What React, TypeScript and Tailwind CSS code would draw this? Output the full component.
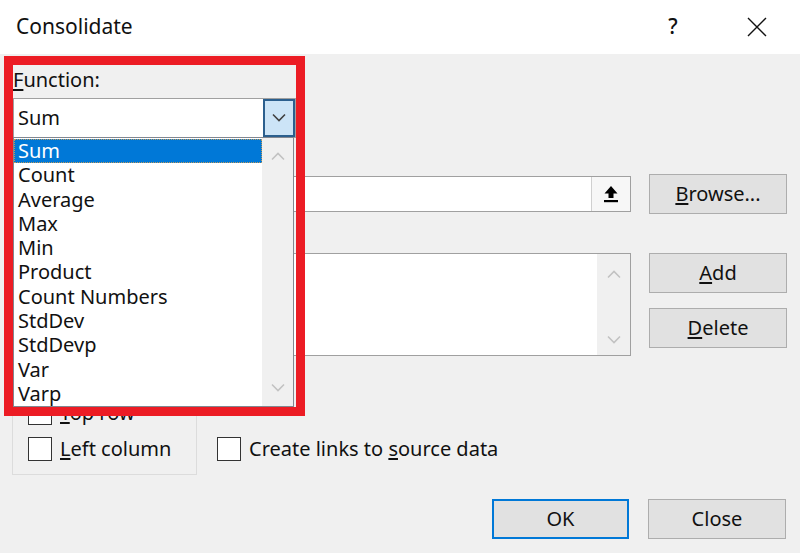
import { useState } from 'react';

const functions = ['Sum', 'Count', 'Average', 'Max', 'Min', 'Product', 'Count Numbers', 'StdDev', 'StdDevp', 'Var', 'Varp'];

function Chevron({ up = false, className = '' }: { up?: boolean; className?: string }) {
  return (
    <svg width="16" height="10" viewBox="0 0 16 10" className={className}>
      <path
        d={up ? 'M2 8.5 L8 2.5 L14 8.5' : 'M2 1.5 L8 7.5 L14 1.5'}
        fill="none"
        stroke="currentColor"
        strokeWidth="1.6"
      />
    </svg>
  );
}

function Checkbox({ children }: { children: React.ReactNode }) {
  return (
    <div className="flex items-center h-[24px]">
      <div className="w-[24px] h-[24px] border-[1.5px] border-[#333] bg-white shrink-0" />
      <span className="ml-[8px] leading-[24px]">{children}</span>
    </div>
  );
}

function Btn({ children, primary = false }: { children: React.ReactNode; primary?: boolean }) {
  return (
    <button
      className={
        'h-[40px] bg-[#e1e1e1] flex items-center justify-center ' +
        (primary ? 'w-[137px] border-2 border-[#0078d7]' : 'w-[138px] border border-[#adadad]')
      }
    >
      {children}
    </button>
  );
}

export default function App() {
  const [selected] = useState('Sum');

  return (
    <div className="relative w-[800px] h-[553px] overflow-hidden bg-[#f0f0f0] text-[20px] text-[#111] font-['Noto_Sans',sans-serif]">
      {/* title bar */}
      <div className="h-[54px] bg-white flex items-center pl-[16px]">
        <span className="text-[21px]">Consolidate</span>
        <div className="ml-auto flex items-center pr-[23px]">
          <span className="w-[40px] text-center text-[21px] font-medium">?</span>
          <div className="w-[40px] ml-[44px] flex justify-center">
            <svg width="20" height="20" viewBox="0 0 20 20">
              <path d="M1 1 L19 19 M19 1 L1 19" stroke="#111" strokeWidth="1.4" fill="none" />
            </svg>
          </div>
        </div>
      </div>

      {/* dialog body (labels of the reference rows sit under the open list) */}
      <div className="px-[13px]">
        <div className="pt-[14px] leading-[24px]">
          <span className="underline underline-offset-2">F</span>unction:
        </div>
        <div className="mt-[6px] h-[40px] w-[283px] border border-[#a0a0a0] bg-white flex items-center">
          <span className="pl-[4px]">{selected}</span>
          <div className="ml-auto w-[32px] h-[38px] bg-[#cce4f7] border-2 border-[#2b5f8e] flex items-center justify-center text-[#404040]">
            <Chevron />
          </div>
        </div>

        <div className="h-[36px]" />
        <div className="h-[40px] flex items-center gap-[18px]">
          <div className="h-[36px] w-[618px] bg-white border border-[#a0a0a0] flex">
            <div className="ml-auto w-[39px] h-full border-l border-[#d0d0d0] bg-[#f7f7f7] flex items-center justify-center">
              <svg width="18" height="20" viewBox="0 0 18 20">
                <path d="M9 2 L2.5 9.5 H6.5 V14 H11.5 V9.5 H15.5 Z" fill="#000" />
                <rect x="2" y="16" width="14" height="2.2" fill="#000" />
              </svg>
            </div>
          </div>
          <Btn>
            <span className="underline underline-offset-2">B</span>rowse...
          </Btn>
        </div>

        <div className="h-[39px]" />
        <div className="flex items-start gap-[18px]">
          <div className="h-[103px] w-[618px] bg-white border border-[#a0a0a0] flex">
            <div className="ml-auto w-[33px] h-full bg-[#f0f0f0] flex flex-col items-center text-[#c2c2c2]">
              <Chevron up className="mt-[15px]" />
              <Chevron className="mt-[56px]" />
            </div>
          </div>
          <div className="flex flex-col gap-[15px]">
            <Btn>
              <span className="underline underline-offset-2">A</span>dd
            </Btn>
            <Btn>
              <span className="underline underline-offset-2">D</span>elete
            </Btn>
          </div>
        </div>

        <div className="mt-[32px] flex">
          <div className="-ml-[1px] w-[185px] h-[87px] border border-[#dcdcdc] pl-[15px] pt-[12px] flex flex-col gap-[12px]">
            <Checkbox>
              <span className="underline underline-offset-2">T</span>op row
            </Checkbox>
            <Checkbox>
              <span className="underline underline-offset-2">L</span>eft column
            </Checkbox>
          </div>
          <div className="ml-[20px] self-end mb-[14px]">
            <Checkbox>
              Create links to <span className="underline underline-offset-2">s</span>ource data
            </Checkbox>
          </div>
        </div>

        <div className="mt-[24px] flex justify-end gap-[19px] pr-[1px]">
          <Btn primary>OK</Btn>
          <Btn>Close</Btn>
        </div>
      </div>

      {/* open dropdown list */}
      <div className="absolute left-[13px] top-[137px] w-[281px] h-[270px] bg-white border border-[#828790] flex">
        <div className="w-[248px] pt-[1px]">
          {functions.map((f) => (
            <div
              key={f}
              className={
                'h-[24.3px] leading-[24px] pl-[4px] ' +
                (f === selected ? 'bg-[#0078d7] text-white outline-1 outline-dotted outline-[#c09a5a] -outline-offset-1' : '')
              }
            >
              {f}
            </div>
          ))}
        </div>
        <div className="ml-auto w-[31px] h-full bg-[#f0f0f0] flex flex-col items-center text-[#c2c2c2]">
          <Chevron up className="mt-[13px]" />
          <Chevron className="mt-[222px]" />
        </div>
      </div>

      {/* red highlight annotation */}
      <div className="absolute left-[4px] top-[56px] w-[301px] h-[360px] border-[9px] border-[#ec1c24] pointer-events-none" />
    </div>
  );
}
